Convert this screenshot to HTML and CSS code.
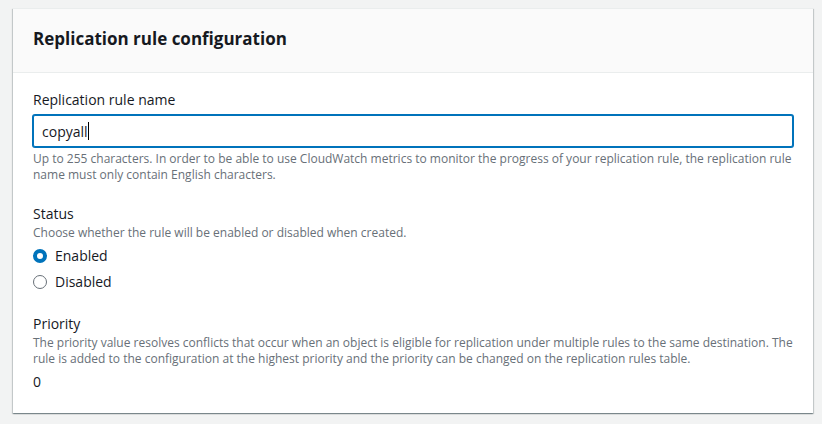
FILE: index.html
```html
<!DOCTYPE html>
<html lang="en">
<head>
<meta charset="utf-8">
<title>Replication rule configuration</title>
<link rel="stylesheet" href="styles.css">
</head>
<body>
<form class="panel">
  <header class="panel-header">
    <h2 class="title">Replication rule configuration</h2>
  </header>
  <div class="panel-body">
    <div class="field">
      <label class="label" for="rule-name">Replication rule name</label>
      <div class="input-wrap">
        <input class="text-input" id="rule-name" type="text" value="copyall" spellcheck="false" aria-describedby="rule-help">
        <span class="caret-overlay" aria-hidden="true"><span class="caret-offset">copyall</span></span>
      </div>
      <p class="hint" id="rule-help">Up to 255 characters. In order to be able to use CloudWatch metrics to monitor the progress of your replication rule, the replication rule name must only contain English characters.</p>
    </div>
    <fieldset class="field">
      <legend class="label">Status</legend>
      <p class="hint">Choose whether the rule will be enabled or disabled when created.</p>
      <label class="option"><input class="radio" type="radio" name="status" checked>Enabled</label>
      <label class="option"><input class="radio" type="radio" name="status">Disabled</label>
    </fieldset>
    <div class="field">
      <div class="label">Priority</div>
      <p class="hint">The priority value resolves conflicts that occur when an object is eligible for replication under multiple rules to the same destination. The rule is added to the configuration at the highest priority and the priority can be changed on the replication rules table.</p>
      <div class="value">0</div>
    </div>
  </div>
</form>
</body>
</html>
```
FILE: styles.css
```css
* {
  box-sizing: border-box;
}

body {
  margin: 0;
  padding: 8px 9px 10px 13px;
  background: #f2f3f3;
  color: #16191f;
  font: 14px/22px "Open Sans", "Noto Sans", sans-serif;
}

.panel {
  background: #fff;
  border-top: 1px solid #eaeded;
  box-shadow: 0 1px 1px rgba(0, 28, 36, 0.3), 1px 1px 1px rgba(0, 28, 36, 0.15), -1px 1px 1px rgba(0, 28, 36, 0.15);
}

.panel-header {
  padding: 19px 20px 22px;
  background: #fafafa;
  border-bottom: 1px solid #eaeded;
}

.title {
  margin: 0;
  font-size: 17px;
  line-height: 22px;
  font-weight: 700;
}

.panel-body {
  display: flex;
  flex-direction: column;
  gap: 20px;
  padding: 16px 20px 20px;
}

.field {
  margin: 0;
  padding: 0;
  border: 0;
  min-width: 0;
}

.label {
  display: block;
  padding: 0;
}

.input-wrap {
  position: relative;
  margin: 4px 0;
}

.text-input {
  display: block;
  width: 100%;
  height: 32px;
  padding: 0 8px;
  border: 1px solid #0073bb;
  border-radius: 2px;
  box-shadow: 0 0 0 1px #0073bb;
  outline: 0;
  background: #fff;
  color: inherit;
  font: inherit;
}

.caret-overlay {
  position: absolute;
  top: 7px;
  left: 9px;
  line-height: 18px;
  pointer-events: none;
}

.caret-offset {
  display: block;
  border-right: 1px solid #000;
  color: transparent;
}

.hint {
  margin: 0;
  color: #687078;
  font-size: 12px;
  line-height: 16px;
}

.option {
  display: flex;
  align-items: center;
  gap: 8px;
  margin-top: 4px;
}

.radio {
  appearance: none;
  width: 14px;
  height: 14px;
  margin: 0;
  border: 1px solid #687078;
  border-radius: 50%;
  background: #fff;
}

.radio:checked {
  border: 4px solid #0073bb;
}

.value {
  margin-top: 4px;
}
```
